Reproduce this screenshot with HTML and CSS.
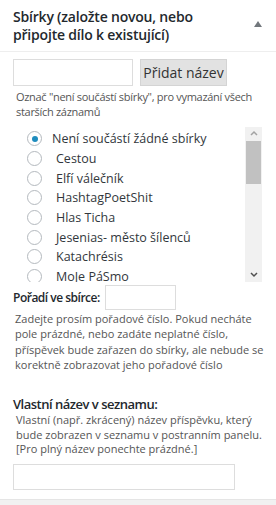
FILE: index.html
```html
<!DOCTYPE html>
<html lang="cs">
<head>
  <meta charset="UTF-8"/>
  <title>Sbírky</title>
  <link rel="stylesheet" href="styles.css">
</head>
<body>

  <!-- METABOX SBIRKY -->
  <div class="postbox">
    <div class="postbox-header">
      <h2>Sbírky (založte novou, nebo připojte dílo k existující)</h2>
      <span class="toggle-arrow">
        <svg width="8" height="6" viewBox="0 0 8 6"><path d="M0 6 L4 0 L8 6 Z" fill="#72777c"/></svg>
      </span>
    </div>

    <div class="inside">
      <div class="add-row">
        <input type="text" class="new-name"/>
        <button class="btn-add">Přidat název</button>
      </div>
      <p class="hint">Označ "není součástí sbírky", pro vymazání všech starších záznamů</p>

      <div class="checklist">
        <ul class="items">
          <li><span class="radio checked"></span>Není součástí žádné sbírky</li>
          <li><span class="radio"></span><span class="pad">Cestou</span></li>
          <li><span class="radio"></span><span class="pad">Elfí válečník</span></li>
          <li><span class="radio"></span><span class="pad">HashtagPoetShit</span></li>
          <li><span class="radio"></span><span class="pad">Hlas Ticha</span></li>
          <li><span class="radio"></span><span class="pad">Jesenias- město šílenců</span></li>
          <li><span class="radio"></span><span class="pad">Katachrésis</span></li>
          <li><span class="radio"></span><span class="pad">MoJe PáSmo</span></li>
        </ul>
        <div class="scrollbar">
          <svg class="arrow" width="16" height="14" viewBox="0 0 16 14"><path d="M5 8 L8 5 L11 8" fill="none" stroke="#a3a3a3" stroke-width="1.5"/></svg>
          <div class="thumb"></div>
          <div class="track"></div>
          <svg class="arrow" width="16" height="14" viewBox="0 0 16 14"><path d="M5 5 L8 8 L11 5" fill="none" stroke="#505050" stroke-width="1.5"/></svg>
        </div>
      </div>

      <div class="order-row">
        <label for="order">Pořadí ve sbírce:</label>
        <input type="text" id="order" class="order-input"/>
      </div>
      <p class="desc">Zadejte prosím pořadové číslo. Pokud necháte pole prázdné, nebo zadáte neplatné číslo, příspěvek bude zařazen do sbírky, ale nebude se korektně zobrazovat jeho pořadové číslo</p>

      <label class="field-title" for="custom">Vlastní název v seznamu:</label>
      <p class="desc small">Vlastní (např. zkrácený) název příspěvku, který bude zobrazen v seznamu v postranním panelu. [Pro plný název ponechte prázdné.]</p>
      <input type="text" id="custom" class="custom-input"/>
    </div>
  </div>

</body>
</html>
```

FILE: styles.css
```css
* {
  margin: 0;
  padding: 0;
  box-sizing: border-box;
}

body {
  font-family: 'Open Sans', sans-serif;
  background: #f1f1f1;
  color: #444;
  font-size: 13px;
}

.postbox {
  background: #ffffff;
  border-bottom: 1px solid #e5e5e5;
  padding-bottom: 9px;
}

.postbox-header {
  display: flex;
  align-items: flex-start;
  justify-content: space-between;
  padding: 8px 14px 7px 13px;
  border-bottom: 1px solid #eeeeee;
}

.postbox-header h2 {
  font-size: 14px;
  font-weight: 600;
  line-height: 18px;
  color: #23282d;
  width: 225px;
  letter-spacing: -0.2px;
}

.toggle-arrow {
  padding-top: 5px;
}

.inside {
  padding: 7px 12px 0 13px;
}

.add-row {
  display: flex;
  gap: 7px;
}

.new-name {
  width: 120px;
  height: 27px;
  border: 1px solid #dddddd;
  background: #fff;
}

.btn-add {
  width: 87px;
  height: 27px;
  border: 1px solid #d4d4d4;
  background: #e2e2e2;
  font-family: 'Open Sans', sans-serif;
  font-size: 14px;
  color: #333;
}

.hint {
  font-size: 11px;
  line-height: 15px;
  color: #555;
  padding: 3px 0 0 3px;
  letter-spacing: -0.3px;
}

.checklist {
  display: flex;
  margin: 8px 0 0 9px;
  height: 155px;
  width: 240px;
}

.items {
  list-style: none;
  flex: 1;
  overflow: hidden;
  padding: 2px 0 0 5px;
}

.items li {
  display: flex;
  align-items: center;
  height: 19.7px;
  font-size: 12.5px;
  color: #32373c;
  white-space: nowrap;
}

.radio {
  width: 15px;
  height: 15px;
  border: 1px solid #b4b9be;
  border-radius: 50%;
  background: #fff;
  margin-right: 10px;
  display: flex;
  align-items: center;
  justify-content: center;
  flex-shrink: 0;
}

.radio.checked::after {
  content: "";
  width: 6px;
  height: 6px;
  border-radius: 50%;
  background: #1e8cbe;
}

.pad {
  padding-left: 4px;
}

.scrollbar {
  width: 17px;
  background: #f1f1f1;
  display: flex;
  flex-direction: column;
  align-items: center;
}

.scrollbar .arrow {
  flex-shrink: 0;
}

.thumb {
  width: 15px;
  height: 43px;
  background: #c1c1c1;
}

.track {
  flex: 1;
}

.order-row {
  display: flex;
  align-items: center;
  gap: 5px;
  margin-top: 3px;
}

.order-row label {
  font-size: 12px;
  font-weight: 600;
  color: #23282d;
  letter-spacing: -0.5px;
}

.order-input {
  width: 71px;
  height: 25px;
  border: 1px solid #dddddd;
}

.desc {
  font-size: 11px;
  line-height: 15.3px;
  color: #555;
  padding: 1px 0 0 2px;
}

.field-title {
  display: block;
  font-size: 13px;
  font-weight: 600;
  color: #23282d;
  letter-spacing: -0.5px;
  margin-top: 23px;
  line-height: 18px;
}

.desc.small {
  padding: 0 0 0 3px;
  line-height: 14.5px;
}

.custom-input {
  display: block;
  width: 222px;
  height: 26px;
  border: 1px solid #dddddd;
  margin-top: 7px;
}
```
